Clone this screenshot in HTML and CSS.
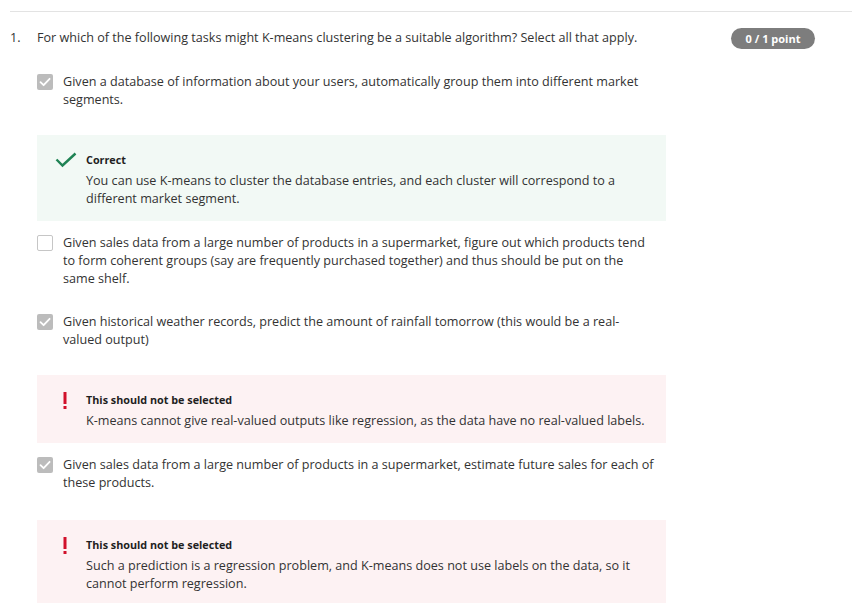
FILE: index.html
```html
<!DOCTYPE html>
<html lang="en">
<head>
<meta charset="utf-8">
<title>Quiz question</title>
<link rel="stylesheet" href="styles.css">
</head>
<body>
<div class="page">
  <div class="question">
    <div class="q-num">1.</div>
    <div class="q-body">
      <div class="q-text">For which of the following tasks might K-means clustering be a suitable algorithm? Select all that apply.</div>
      <div class="choices">
        <div class="choice with-feedback">
          <div class="choice-row">
            <span class="box checked"><svg width="16" height="16" viewBox="0 0 16 16"><path d="M3.5 8.2 L6.6 11.2 L12.6 4.8" fill="none" stroke="#fff" stroke-width="1.8" stroke-linecap="round" stroke-linejoin="round"/></svg></span>
            <div class="choice-text">Given a database of information about your users, automatically group them into different market segments.</div>
          </div>
          <div class="feedback correct">
            <span class="fb-icon"><svg width="22" height="16" viewBox="0 0 22 16"><path d="M1.5 7.5 L7.5 13.5 L20.5 1.5" fill="none" stroke="#1f8354" stroke-width="2.4"/></svg></span>
            <div class="fb-content">
              <div class="fb-title">Correct</div>
              <div class="fb-text">You can use K-means to cluster the database entries, and each cluster will correspond to a different market segment.</div>
            </div>
          </div>
        </div>
        <div class="choice">
          <div class="choice-row">
            <span class="box"></span>
            <div class="choice-text">Given sales data from a large number of products in a supermarket, figure out which products tend to form coherent groups (say are frequently purchased together) and thus should be put on the same shelf.</div>
          </div>
        </div>
        <div class="choice with-feedback">
          <div class="choice-row">
            <span class="box checked"><svg width="16" height="16" viewBox="0 0 16 16"><path d="M3.5 8.2 L6.6 11.2 L12.6 4.8" fill="none" stroke="#fff" stroke-width="1.8" stroke-linecap="round" stroke-linejoin="round"/></svg></span>
            <div class="choice-text">Given historical weather records, predict the amount of rainfall tomorrow (this would be a real-valued output)</div>
          </div>
          <div class="feedback wrong">
            <span class="fb-icon"><svg width="4" height="17" viewBox="0 0 4 17"><rect x="0.5" y="0" width="3" height="12" fill="#d1112b"/><rect x="0.5" y="14" width="3" height="3" fill="#d1112b"/></svg></span>
            <div class="fb-content">
              <div class="fb-title">This should not be selected</div>
              <div class="fb-text">K-means cannot give real-valued outputs like regression, as the data have no real-valued labels.</div>
            </div>
          </div>
        </div>
        <div class="choice with-feedback last">
          <div class="choice-row">
            <span class="box checked"><svg width="16" height="16" viewBox="0 0 16 16"><path d="M3.5 8.2 L6.6 11.2 L12.6 4.8" fill="none" stroke="#fff" stroke-width="1.8" stroke-linecap="round" stroke-linejoin="round"/></svg></span>
            <div class="choice-text">Given sales data from a large number of products in a supermarket, estimate future sales for each of these products.</div>
          </div>
          <div class="feedback wrong">
            <span class="fb-icon"><svg width="4" height="17" viewBox="0 0 4 17"><rect x="0.5" y="0" width="3" height="12" fill="#d1112b"/><rect x="0.5" y="14" width="3" height="3" fill="#d1112b"/></svg></span>
            <div class="fb-content">
              <div class="fb-title">This should not be selected</div>
              <div class="fb-text">Such a prediction is a regression problem, and K-means does not use labels on the data, so it cannot perform regression.</div>
            </div>
          </div>
        </div>
      </div>
    </div>
    <div class="badge">0 / 1 point</div>
  </div>
</div>
</body>
</html>
```

FILE: styles.css
```css
* { box-sizing: border-box; }
html, body { margin: 0; padding: 0; background: #fff; }
body {
  font-family: "Open Sans", "Liberation Sans", Arial, sans-serif;
  font-size: 12.6px;
  line-height: 18px;
  color: #333;
}
.page {
  padding: 11px 10px 0 10px;
}
.question {
  border-top: 1px solid #e3e3e3;
  padding: 17px 37px 0 0;
  display: flex;
  align-items: flex-start;
}
.q-num {
  width: 27px;
  flex: none;
}
.q-body {
  width: 629px;
  flex: none;
}
.choices {
  margin-top: 26px;
  display: flex;
  flex-direction: column;
}
.choice {
  padding-bottom: 25px;
}
.choice.with-feedback {
  padding-bottom: 13px;
}
.choice-row {
  display: flex;
  align-items: flex-start;
}
.box {
  flex: none;
  width: 16px;
  height: 16px;
  margin-top: 1px;
  margin-right: 10px;
  border-radius: 2px;
  border: 1.5px solid #c6c6c6;
  background: #fff;
  display: flex;
}
.box.checked {
  border: none;
  background: #bcbcbc;
}
.choice-text {
  flex: 1;
  padding-right: 9px;
}
.feedback {
  margin-top: 26px;
  display: flex;
  align-items: flex-start;
  padding: 16px 16px 13px 18px;
}
.last .feedback { margin-top: 28px; }
.feedback.correct { background: #f2f9f5; }
.feedback.wrong { background: #fdf2f3; }
.fb-icon {
  flex: none;
  width: 31px;
  display: flex;
}
.correct .fb-icon { padding-top: 1px; }
.wrong .fb-icon { padding-left: 8px; padding-top: 1px; }
.fb-title {
  font-size: 10.8px;
  font-weight: 700;
  color: #1f1f1f;
  line-height: 18px;
}
.fb-text {
  margin-top: 3px;
}
.badge {
  margin-left: auto;
  margin-top: -1px;
  flex: none;
  width: 84px;
  height: 21px;
  border-radius: 11px;
  background: #7d7d7d;
  color: #fff;
  font-size: 11px;
  font-weight: 700;
  line-height: 21px;
  text-align: center;
}
```
